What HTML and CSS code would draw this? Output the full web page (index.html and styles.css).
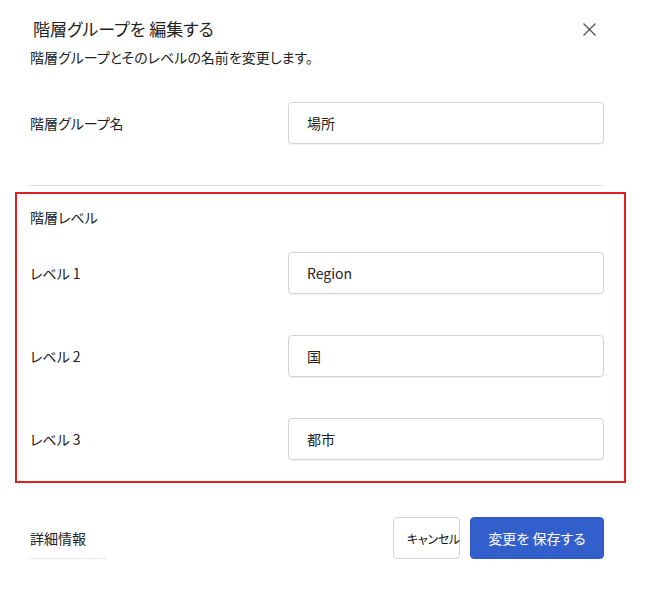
FILE: index.html
```html
<!DOCTYPE html>
<html lang="ja">
<head>
<meta charset="utf-8">
<title>階層グループを編集する</title>
<link rel="stylesheet" href="styles.css">
</head>
<body>
<div class="dialog">
  <div class="header">
    <h1 class="title">階層グループを 編集する</h1>
    <button class="close" aria-label="閉じる">
      <svg width="13" height="13" viewBox="0 0 13 13"><path d="M0.5 0.5 L12.5 12.5 M12.5 0.5 L0.5 12.5" stroke="#555" stroke-width="1.3" fill="none"/></svg>
    </button>
  </div>
  <p class="subtitle">階層グループとそのレベルの名前を変更します。</p>

  <div class="row group-row">
    <label class="label">階層グループ名</label>
    <div class="input">場所</div>
  </div>

  <hr class="divider">

  <section class="levels">
    <div class="levels-title">階層レベル</div>
    <div class="level-list">
      <div class="row">
        <label class="label">レベル 1</label>
        <div class="input">Region</div>
      </div>
      <div class="row">
        <label class="label">レベル 2</label>
        <div class="input">国</div>
      </div>
      <div class="row">
        <label class="label">レベル 3</label>
        <div class="input">都市</div>
      </div>
    </div>
  </section>

  <div class="footer">
    <a class="more">詳細情報</a>
    <div class="actions">
      <button class="btn btn-cancel">キャンセル</button>
      <button class="btn btn-save">変更を 保存する</button>
    </div>
  </div>
</div>
</body>
</html>
```

FILE: styles.css
```css
* { box-sizing: border-box; }
html, body {
  margin: 0;
  padding: 0;
  background: #ffffff;
}
body {
  font-family: "Noto Sans CJK JP", "Noto Sans", sans-serif;
  font-feature-settings: "palt";
  color: #1a1a1a;
}
.dialog {
  width: 645px;
  padding: 0 41px 0 30px;
}
.header {
  display: flex;
  justify-content: space-between;
  align-items: center;
  padding-top: 16px;
  height: 42px;
}
.title {
  margin: 0 0 0 3px;
  font-size: 17px;
  font-weight: 400;
  line-height: 26px;
  letter-spacing: 0;
  color: #222;
}
.close {
  border: 0;
  background: none;
  padding: 0;
  margin-right: 8px;
  width: 13px;
  height: 13px;
  display: flex;
}
.subtitle {
  margin: 5px 0 0;
  font-size: 14px;
  line-height: 20px;
  color: #222;
}
.row {
  display: flex;
  align-items: center;
  height: 42px;
}
.group-row {
  margin-top: 35px;
}
.label {
  width: 258px;
  font-size: 14px;
  line-height: 20px;
  color: #222;
}
.input {
  flex: 1;
  height: 42px;
  border: 1px solid #d4d4d4;
  border-radius: 4px;
  box-shadow: 0 1px 1px rgba(0,0,0,0.06);
  padding-left: 18px;
  display: flex;
  align-items: center;
  font-size: 14px;
  color: #222;
}
.divider {
  margin: 41px 0 0;
  border: 0;
  border-top: 1px solid #e1e1e1;
  height: 0;
}
.levels {
  margin: 6px -22px 0 -15px;
  border: 2px solid #e21f1f;
  padding: 13px 20px 21px 13px;
}
.levels-title {
  font-size: 14px;
  line-height: 20px;
  color: #222;
}
.level-list {
  margin-top: 25px;
  display: flex;
  flex-direction: column;
  gap: 41px;
}
.footer {
  margin-top: 34px;
  display: flex;
  justify-content: space-between;
  align-items: flex-start;
}
.more {
  margin-top: 11px;
  width: 77px;
  font-size: 14px;
  line-height: 20px;
  padding-bottom: 10px;
  border-bottom: 1px solid #e8e8f3;
  color: #222;
}
.actions {
  display: flex;
  gap: 10px;
}
.btn {
  height: 42px;
  border-radius: 4px;
  font-family: inherit;
  font-feature-settings: "palt";
  cursor: pointer;
}
.btn-cancel {
  width: 67px;
  padding: 0 0 0 13px;
  text-align: left;
  background: #fff;
  border: 1px solid #d4d4d4;
  font-size: 12px;
  letter-spacing: -0.3px;
  color: #111;
  white-space: nowrap;
}
.btn-save {
  width: 134px;
  background: #335fcc;
  border: 1px solid #2f58c2;
  color: #fff;
  font-size: 14px;
}
```
